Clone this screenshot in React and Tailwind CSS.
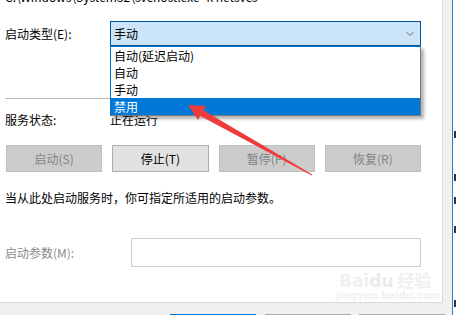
import { ChevronDown } from 'lucide-react';

const font = "font-['Microsoft_YaHei_UI','Noto_Sans_CJK_SC',sans-serif]";

const Btn = ({ label, disabled }) => (
    <div
        className={
            'h-[27px] flex items-center justify-center border text-[12px] ' +
            (disabled
                ? 'bg-[#cccccc] border-[#bfbfbf] text-[#838383]'
                : 'bg-[#e1e1e1] border-[#adadad] text-black')
        }
    >
        {label}
    </div>
);

const App = () => {
    const options = ['自动(延迟启动)', '自动', '手动', '禁用'];

    return (
        <div className={`w-[456px] h-[315px] flex overflow-hidden bg-[#f0f0f0] relative ${font}`}>
            {/* left side: the property page */}
            <div className="w-[452px] flex flex-col">
                <div className="w-[443px] h-[303px] bg-white border-r border-b border-[#d9d9d9] relative overflow-hidden text-[12px] leading-[16px] text-black">
                    <div className="pl-[5px] -mt-[11px] whitespace-nowrap">C:\Windows\System32\svchost.exe -k netsvcs</div>

                    {/* startup type */}
                    <div className="mt-[16px] flex items-center h-[25px]">
                        <div className="w-[110px] pl-[5px]">启动类型(E):</div>
                        <div className="w-[311px] h-[25px] bg-[#cce4f7] border border-[#005499] flex items-center justify-between pl-[3px] pr-[4px]">
                            <span>手动</span>
                            <ChevronDown className="w-[12px] h-[12px] text-[#444]" strokeWidth={1.5} />
                        </div>
                    </div>

                    <div className="mt-[52px] ml-[5px] w-[416px] h-px bg-[#b9b9b9]" />

                    <div className="mt-[13px] flex items-center h-[16px]">
                        <div className="w-[110px] pl-[5px]">服务状态:</div>
                        <div>正在运行</div>
                    </div>

                    <div className="mt-[17px] ml-[6px] w-[415px] grid grid-cols-4 gap-[10px]">
                        <Btn label="启动(S)" disabled />
                        <Btn label="停止(T)" />
                        <Btn label="暂停(P)" disabled />
                        <Btn label="恢复(R)" disabled />
                    </div>

                    <div className="mt-[18px] pl-[5px]">当从此处启动服务时，你可指定所适用的启动参数。</div>

                    <div className="mt-[32px] flex items-center">
                        <div className="w-[131px] pl-[5px] text-[#8a8a8a]">启动参数(M):</div>
                        <div className="w-[290px] h-[29px] border border-[#cccccc]" />
                    </div>

                    {/* dropdown list */}
                    <div className="absolute top-[46px] left-[110px] w-[311px] h-[70px] bg-white border border-[#7a7a7a] border-t-[#0078d7] border-l-[#0078d7] shadow-[3px_3px_3px_rgba(0,0,0,0.3)] flex flex-col">
                        {options.map((o, i) => (
                            <div
                                key={o}
                                className={
                                    'h-[17px] flex items-center pl-[3px] ' +
                                    (i === 3 ? 'bg-[#0078d7] text-white' : 'text-black')
                                }
                            >
                                {o}
                            </div>
                        ))}
                    </div>

                    {/* watermark */}
                    <div className="absolute left-[339px] top-[270px] text-[17px] font-bold leading-[20px] text-[#f0f0f0] font-['DejaVu_Sans',sans-serif]">
                        Bai<span className="text-[#ebebeb]">du</span>
                        <span className="font-['Noto_Sans_CJK_SC'] ml-[4px]">经验</span>
                    </div>
                    <div className="absolute left-[336px] top-[291px] text-[10px] leading-[10px] font-bold text-[#f1f1f1] font-['DejaVu_Sans',sans-serif]">
                        jingyan.baidu.com
                    </div>
                </div>

                {/* bottom dialog buttons peeking in */}
                <div className="flex-1 relative">
                    <div className="absolute bottom-0 left-[170px] w-[86px] h-px bg-[#0078d7]" />
                    <div className="absolute bottom-0 left-[265px] w-[86px] h-px bg-[#adadad]" />
                    <div className="absolute bottom-0 left-[359px] w-[86px] h-px bg-[#adadad]" />
                </div>
            </div>

            <div className="w-px h-full bg-[#2a7fd4]" />
            <div className="flex-1 h-full bg-white relative">
                <div className="absolute top-[131px] left-[1px] w-[2px] h-[7px] bg-[#333]" />
                <div className="absolute top-[174px] left-[1px] w-[2px] h-[7px] bg-[#333]" />
                <div className="absolute top-[197px] left-[1px] w-[2px] h-[7px] bg-[#333]" />
                <div className="absolute top-[226px] left-[1px] w-[2px] h-[7px] bg-[#333]" />
                <div className="absolute top-[300px] left-[1px] w-[2px] h-[7px] bg-[#333]" />
            </div>

            {/* red annotation arrow */}
            <svg className="absolute left-0 top-0 pointer-events-none" width="456" height="315">
                <polygon points="188,105 206,106 198,120" fill="#ef3b3b" />
                <polygon points="199.5,115.5 203,110 312.3,174.6 311.8,175.4" fill="#ef3b3b" />
            </svg>
        </div>
    );
};

export default App;
